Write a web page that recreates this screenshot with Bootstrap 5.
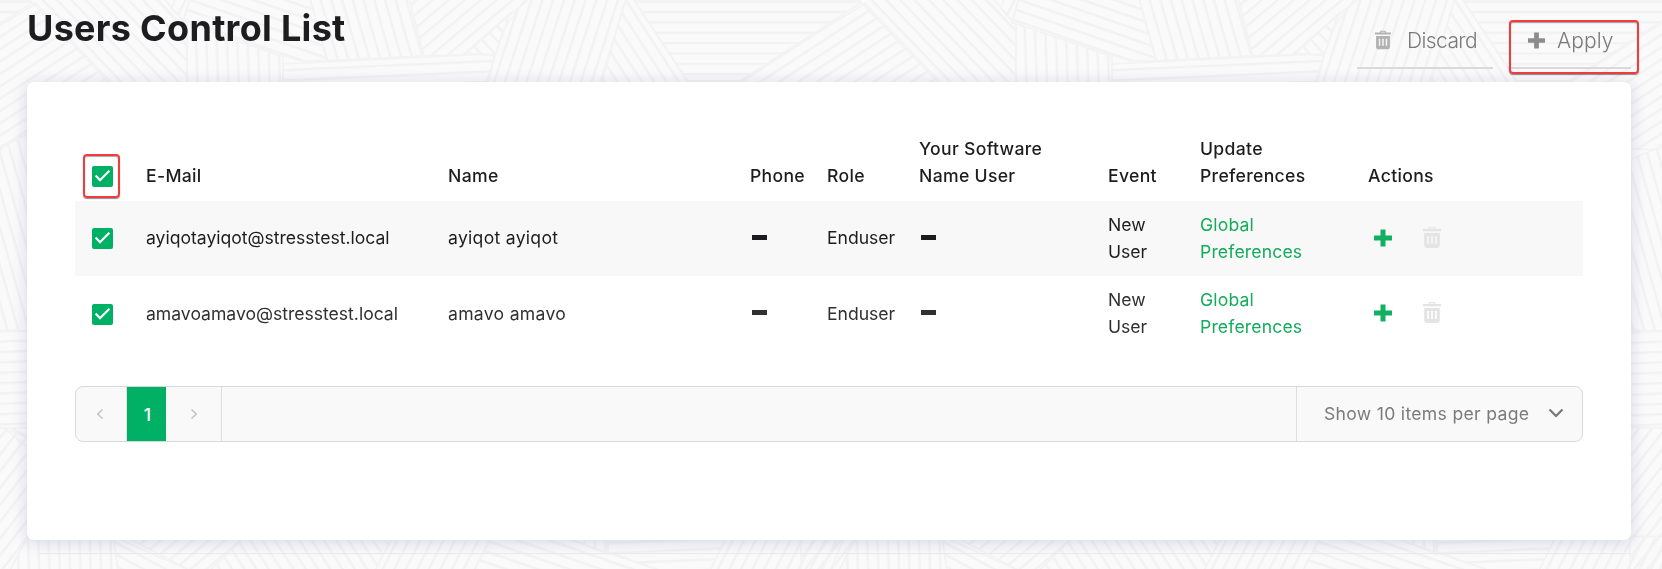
<!DOCTYPE html>
<html lang="en">
<head>
<meta charset="utf-8">
<meta name="viewport" content="width=device-width, initial-scale=1">
<title>Users Control List</title>
<link rel="stylesheet" href="https://cdn.jsdelivr.net/npm/bootstrap@5.3.0/dist/css/bootstrap.min.css">
<style>
  :root { --brand: #00b064; --brand-text: #14ab5c; --ink: #1d1d1f; }
  body { font-family: Inter, "Open Sans", sans-serif; font-size: 17.6px; line-height: 27px; color: var(--ink); background: #fafafa; height: 569px; overflow: hidden; }
  .backdrop { z-index: -1; }
  .page { padding: 0 31px 0 27px; }
  .page-head { height: 82px; }
  h1 { font-size: 36px; font-weight: 650; line-height: 44px; letter-spacing: .3px; padding-top: 6px; }
  .tool { height: 50px; margin-top: 19px; padding: 0 0 6px; border: 0; border-bottom: 2px solid #d9d9d9; border-radius: 0; color: #7a7a7a; font-size: 21px; font-weight: 350; line-height: 27px; }
  .tool-discard { width: 136px; padding-left: 18px; letter-spacing: -.6px; margin-right: 15px; }
  .tool-apply { width: 123px; padding-left: 20px; letter-spacing: .1px; }
  .marker { border: 2px solid #f23c3c; border-radius: 4px; box-shadow: 0 1px 1px rgba(0,0,0,.45), inset 0 1px 1px rgba(0,0,0,.35); pointer-events: none; }
  .marker-apply { left: 1px; top: 20px; width: 130px; height: 54px; }
  .marker-check { left: 8px; top: -12px; width: 37px; height: 44px; }
  .panel { height: 458px; border: 0; border-radius: 7px; box-shadow: 0 2px 14px 2px rgba(80,80,170,.17); padding: 53px 48px 0; }
  .grid-table { table-layout: fixed; --bs-table-bg: transparent; color: var(--ink); letter-spacing: -.02px; }
  .grid-table > :not(caption) > * > * { padding: 0; border: 0; box-shadow: none; vertical-align: middle; }
  .grid-table th { font-weight: 450; letter-spacing: .32px; height: 66px; vertical-align: bottom !important; padding-bottom: 12px !important; }
  .grid-table td { height: 75px; }
  .grid-table tbody tr:first-child td, .grid-table tbody td.lifted { padding-bottom: 2px; }
  .grid-table tbody tr:first-child { background: #f8f8f8; }
  .grid-table tbody tr:last-child { color: #303032; }
  .person { letter-spacing: .28px; }
  .tick { width: 21px; height: 21px; margin-left: 17px; display: block; }
  th .tick { margin-bottom: 2px; }
  td .tick { margin-top: 1px; }
  .dash { display: block; width: 15px; height: 5px; background: currentColor; margin-left: 2px; }
  .grid-table a { color: var(--brand-text); text-decoration: none; letter-spacing: .15px; }
  .row-actions { padding-left: 6px; gap: 31px; }
  .pager { height: 56px; margin-top: 35px; background: #f9f9f9; border: 1px solid #d9d9d9; border-radius: 8px; overflow: hidden; }
  .pager-step { width: 51px; padding-right: 3px; border-right: 1px solid #dedede; }
  .pager-step + .pager-page + .pager-step { width: 56px; padding-right: 0; }
  .pager-page { width: 39px; padding-left: 2px; background: var(--brand); color: #fff; font-weight: 500; }
  .pager-size { width: 286px; border-left: 1px solid #dedede; padding: 0 18px 2px 27px; color: #7b7b7b; white-space: nowrap; letter-spacing: .3px; }
</style>
</head>
<body>
<svg class="backdrop position-fixed top-0 start-0" width="1662" height="569" viewBox="0 1.5 1662 566" preserveAspectRatio="none" aria-hidden="true">
  <defs>
    <pattern id="h" width="40" height="10.3" patternUnits="userSpaceOnUse" patternTransform="translate(0 2)"><path d="M0 1.2H40" stroke="#f2f2f2" stroke-width="2.2"/></pattern>
    <pattern id="hs" href="#h" patternTransform="rotate(-2.5)"/>
    <pattern id="up" href="#h" patternTransform="rotate(-33)"/>
    <pattern id="up2" href="#h" patternTransform="rotate(-40)"/>
    <pattern id="up3" href="#h" patternTransform="rotate(-52)"/>
    <pattern id="dn" href="#h" patternTransform="rotate(46)"/>
    <pattern id="sh" href="#h" patternTransform="rotate(19)"/>
    <pattern id="sh2" href="#h" patternTransform="rotate(28)"/>
    <pattern id="v" href="#h" patternTransform="rotate(88)"/>
    <pattern id="st" href="#h" patternTransform="rotate(74)"/>
    <pattern id="sd" href="#h" patternTransform="rotate(57)"/>
    <pattern id="su" href="#h" patternTransform="rotate(-72)"/>
    <pattern id="su2" href="#h" patternTransform="rotate(-63)"/>
    <g id="tile" stroke="#f3f3f3" stroke-width="1.6">
      <path fill="url(#h)" d="M-196 0H31V5L-89 82H-142Z"/>
      <path fill="url(#up)" d="M36 5L110 82V100L2 146V150H-27V150L-89 82Z"/>
      <path fill="url(#dn)" d="M28 0H164L187 27V90H115L36 8Z"/>
      <path fill="url(#su2)" d="M175 0H190L183 22L172 10Z"/>
      <path fill="url(#sh)" d="M190 0H310L327 62H300L183 24Z"/>
      <path fill="url(#v)" d="M187 25L283 58V90H187Z"/>
      <path fill="url(#st)" d="M310 0H409L424 57L327 62Z"/>
      <path fill="url(#hs)" d="M283 65L495 55L487 90H283Z"/>
      <path fill="url(#up2)" d="M409 0H530L505 20L465 56L424 57Z"/>
      <path fill="url(#dn)" d="M465 54L510 15L495 57Z"/>
      <path fill="url(#su)" d="M526 0H626L600 90H484L504 30Z"/>
      <path fill="url(#sd)" d="M626 0H633L693 90H598Z"/>
      <path fill="url(#st)" d="M2 148L36 130V330H-27V160Z"/>
      <path fill="url(#hs)" d="M-28 331H36V427H-28Z"/>
      <path fill="url(#sh2)" d="M4 427H36V454Z"/>
      <path fill="url(#up3)" d="M-28 427H2L36 440V520L10 569H-28Z"/>
      <path fill="url(#v)" d="M27 535H113L118 569H10Z"/>
      <path fill="url(#sh2)" d="M113 535L190 569H118Z"/>
      <path fill="url(#up2)" d="M125 535H245L210 569H190Z"/>
      <path fill="url(#sd)" d="M245 535H393L375 569H210Z"/>
      <path fill="url(#su2)" d="M393 535H492L474 569H375Z"/>
      <path fill="url(#sh)" d="M492 535H560L660 569H474Z"/>
      <path fill="url(#v)" d="M565 535H608V553Z"/>
      <path fill="url(#hs)" d="M608 535H727L710 569H660L608 550Z"/>
      <path fill="url(#su2)" d="M727 535H845L830 569H710Z"/>
    </g>
  </defs>
  <use href="#tile"/><use href="#tile" x="829"/><use href="#tile" x="1658"/>
</svg>

<svg class="d-none" aria-hidden="true">
  <symbol id="i-check" viewBox="0 0 21 21"><rect width="21" height="21" rx="2" fill="#00b064"/><path d="M3.600 9.600L8 14.200L17.400 4.800" fill="none" stroke="#fff" stroke-width="2.200"/></symbol>
  <symbol id="i-trash" viewBox="0 0 18 21"><path fill="currentColor" fill-rule="evenodd" d="M5.500 1.500Q5.500 0 7 0H11Q12.500 0 12.500 1.500V2H18V4.200H0V2H5.500ZM7 2H11V1.200H7ZM1.200 6H16.800V18Q16.800 21 13.800 21H4.200Q1.200 21 1.200 18ZM4.300 9V17H5.900V9ZM8.200 9V17H9.800V9ZM12.100 9V17H13.700V9Z"/></symbol>
  <symbol id="i-plus" viewBox="0 0 18 18"><path fill="currentColor" d="M6.500 0.500H11.500V6.500H18V11.500H11.500V17.500H6.500V11.500H0V6.500H6.500Z"/></symbol>
</svg>

<main class="page">
  <header class="page-head d-flex justify-content-between align-items-start">
    <h1 class="m-0">Users Control List</h1>
    <div class="d-flex">
      <button class="btn tool tool-discard d-flex align-items-center"><svg width="16" height="20" class="me-3" style="color:#b2b2b2"><use href="#i-trash"/></svg>Discard</button>
      <div class="position-relative">
        <button class="btn tool tool-apply d-flex align-items-center"><svg width="17" height="17" class="me-2" style="color:#8c8c8c"><use href="#i-plus"/></svg><span class="ps-1">Apply</span></button>
        <span class="marker marker-apply position-absolute"></span>
      </div>
    </div>
  </header>

  <section class="card panel">
    <table class="table grid-table m-0">
      <colgroup><col style="width:71px"><col style="width:302px"><col style="width:302px"><col style="width:77px"><col style="width:92px"><col style="width:189px"><col style="width:92px"><col style="width:168px"><col></colgroup>
      <thead>
        <tr>
          <th><div class="position-relative"><svg class="tick"><use href="#i-check"/></svg><span class="marker marker-check position-absolute"></span></div></th>
          <th>E-Mail</th><th>Name</th><th>Phone</th><th>Role</th><th>Your Software<br>Name User</th><th>Event</th><th>Update<br>Preferences</th><th>Actions</th>
        </tr>
      </thead>
      <tbody>
        <tr>
          <td><svg class="tick"><use href="#i-check"/></svg></td>
          <td>ayiqotayiqot@stresstest.local</td><td class="person">ayiqot ayiqot</td><td><span class="dash"></span></td><td>Enduser</td><td><span class="dash"></span></td><td>New<br>User</td><td><a href="#">Global<br>Preferences</a></td>
          <td><div class="row-actions d-flex align-items-center"><svg width="18" height="18" style="color:#14b062"><use href="#i-plus"/></svg><svg width="18" height="21" style="color:#e4e4e4"><use href="#i-trash"/></svg></div></td>
        </tr>
        <tr>
          <td><svg class="tick"><use href="#i-check"/></svg></td>
          <td>amavoamavo@stresstest.local</td><td class="person">amavo amavo</td><td class="lifted"><span class="dash"></span></td><td>Enduser</td><td class="lifted"><span class="dash"></span></td><td class="lifted">New<br>User</td><td class="lifted"><a href="#">Global<br>Preferences</a></td>
          <td class="lifted"><div class="row-actions d-flex align-items-center"><svg width="18" height="18" style="color:#14b062"><use href="#i-plus"/></svg><svg width="18" height="21" style="color:#e4e4e4"><use href="#i-trash"/></svg></div></td>
        </tr>
      </tbody>
    </table>
    <nav class="pager d-flex" aria-label="Pages">
      <span class="pager-step d-flex align-items-center justify-content-center"><svg width="8" height="12" fill="none" stroke="#c4c4c4" stroke-width="1.6"><path d="M6.500 1.500L1.800 6L6.500 10.500"/></svg></span>
      <span class="pager-page d-flex align-items-center justify-content-center">1</span>
      <span class="pager-step d-flex align-items-center justify-content-center"><svg width="8" height="12" fill="none" stroke="#c4c4c4" stroke-width="1.6"><path d="M1.500 1.500L6.200 6L1.500 10.500"/></svg></span>
      <span class="pager-size d-flex align-items-center justify-content-between ms-auto">Show 10 items per page<svg width="16" height="12" fill="none" stroke="#777" stroke-width="2.200"><path d="M1.500 2.500L8 9L14.500 2.500"/></svg></span>
    </nav>
  </section>
  <div class="border-top" style="margin:13px 0 0 13px;border-color:#ececec!important"></div>
</main>
<script src="https://cdn.jsdelivr.net/npm/bootstrap@5.3.0/dist/js/bootstrap.bundle.min.js"></script>
</body>
</html>
